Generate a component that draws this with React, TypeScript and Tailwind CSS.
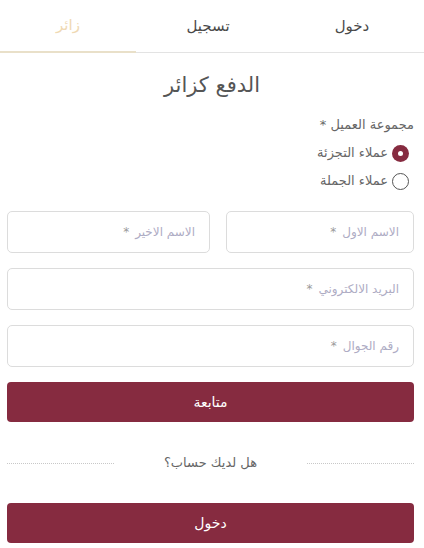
import { useState } from "react";

const tabs = [
  { label: "دخول", active: false },
  { label: "تسجيل", active: false },
  { label: "زائر", active: true },
];

function Field({ placeholder, className = "flex-1" }: { placeholder: string; className?: string }) {
  return (
    <div className={`h-[42px] rounded-[5px] border border-[#dcdcdc] flex items-center pr-[14px] ${className}`}>
      <span className="text-[12px] text-[#aeacc4]">{placeholder}</span>
      <span className="text-[12px] text-[#9a9a9a] mr-[6px]">*</span>
    </div>
  );
}

function Radio({ label, checked, onClick }: { label: string; checked: boolean; onClick: () => void }) {
  return (
    <button onClick={onClick} className="flex items-center gap-[4px] h-[28px]">
      {checked ? (
        <span className="w-[17px] h-[17px] rounded-full bg-[#862b40] flex items-center justify-center">
          <span className="w-[5px] h-[5px] rounded-full bg-white" />
        </span>
      ) : (
        <span className="w-[17px] h-[17px] rounded-full border border-[#555]" />
      )}
      <span className="text-[13px] text-[#666]">{label}</span>
    </button>
  );
}

export default function App() {
  const [group, setGroup] = useState("retail");

  return (
    <div dir="rtl" className="w-[424px] h-[548px] bg-white font-['DejaVu_Sans',sans-serif] overflow-hidden">
      {/* Tabs */}
      <div className="grid grid-cols-[1fr_1fr_136px] border-b border-[#e3e3e3] h-[53px]">
        {tabs.map((tab) => (
          <div
            key={tab.label}
            className={
              tab.active
                ? "flex items-center justify-center text-[15px] text-[#efd9b4] border-b-2 border-[#e9e0c9] -mb-px"
                : "flex items-center justify-center text-[15px] text-[#4a4a4a]"
            }
          >
            {tab.label}
          </div>
        ))}
      </div>

      {/* Title */}
      <h1 className="text-center text-[21px] text-[#555] mt-[17px] leading-[30px]">الدفع كزائر</h1>

      <div className="pr-[10px] pl-[7px]">
        {/* Customer group */}
        <div className="mt-[14px]">
          <div className="text-[13px] text-[#666] leading-[22px]">مجموعة العميل *</div>
          <div className="flex flex-col items-start pr-[5px] mt-[3px]">
            <Radio label="عملاء التجزئة" checked={group === "retail"} onClick={() => setGroup("retail")} />
            <Radio label="عملاء الجملة" checked={group === "wholesale"} onClick={() => setGroup("wholesale")} />
          </div>
        </div>

        {/* Fields */}
        <div className="flex gap-[16px] mt-[16px]">
          <Field placeholder="الاسم الاول" className="w-[188px] flex-none" />
          <Field placeholder="الاسم الاخير" />
        </div>
        <div className="flex mt-[15px]">
          <Field placeholder="البريد الالكتروني" />
        </div>
        <div className="flex mt-[15px]">
          <Field placeholder="رقم الجوال" />
        </div>

        <button className="w-full h-[40px] mt-[15px] rounded-[4px] bg-[#862b40] text-white text-[14px]">متابعة</button>

        {/* Divider */}
        <div className="flex items-center mt-[31px] h-[20px]">
          <div className="flex-1 border-t border-dotted border-[#c8c8c8]" />
          <span className="px-[50px] text-[13px] text-[#666]">هل لديك حساب؟</span>
          <div className="flex-1 border-t border-dotted border-[#c8c8c8]" />
        </div>

        <button className="w-full h-[40px] mt-[30px] rounded-[4px] bg-[#862b40] text-white text-[14px]">دخول</button>
      </div>
    </div>
  );
}
